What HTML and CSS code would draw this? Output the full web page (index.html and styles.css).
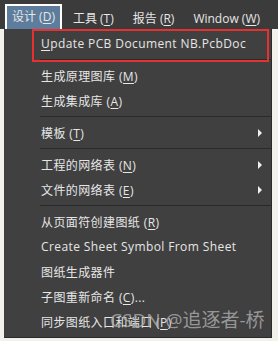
FILE: index.html
```html
<!DOCTYPE html>
<html lang="zh-CN">
<head>
    <meta charset="UTF-8">
    <title>设计菜单</title>
    <link rel="stylesheet" href="styles.css">
</head>
<body>
    <div class="menubar">
        <span class="menu active">设计 (<u>D</u>)</span>
        <span class="menu">工具 (<u>T</u>)</span>
        <span class="menu">报告 (<u>R</u>)</span>
        <span class="menu">Window (<u>W</u>)</span>
    </div>

    <div class="dropdown">
        <ul>
            <li class="item"><span><u>U</u>pdate PCB Document NB.PcbDoc</span></li>
            <li class="sep"></li>
            <li class="item"><span>生成原理图库 (<u>M</u>)</span></li>
            <li class="item"><span>生成集成库 (<u>A</u>)</span></li>
            <li class="sep"></li>
            <li class="item"><span>模板 (<u>T</u>)</span><i class="arrow"></i></li>
            <li class="sep"></li>
            <li class="item"><span>工程的网络表 (<u>N</u>)</span><i class="arrow"></i></li>
            <li class="item"><span>文件的网络表 (<u>E</u>)</span><i class="arrow"></i></li>
            <li class="sep"></li>
            <li class="item"><span>从页面符创建图纸 (<u>R</u>)</span></li>
            <li class="item"><span>Create Sheet Symbol From Sheet</span></li>
            <li class="item"><span>图纸生成器件</span></li>
            <li class="item"><span>子图重新命名 (<u>C</u>)...</span></li>
            <li class="item"><span>同步图纸入口和端口 (<u>P</u>)</span></li>
        </ul>
    </div>

    <!-- annotation drawn over the screenshot -->
    <div class="mark"></div>
    <div class="watermark">CSDN @追逐者-桥</div>
</body>
</html>
```

FILE: styles.css
```css
body {
    margin: 0;
    width: 278px;
    height: 341px;
    overflow: hidden;
    position: relative;
    background-color: #f3f1ec;
    font-family: "Open Sans", "Noto Sans CJK SC", sans-serif;
    font-size: 12px;
    letter-spacing: 0.4px;
    color: #e6e6e6;
    white-space: nowrap;
}

u {
    text-underline-offset: 2px;
}

.menubar {
    display: flex;
    align-items: flex-end;
    height: 29px;
    padding-left: 5px;
    background-color: #3b3b3b;
    letter-spacing: 0;
}

.menu {
    height: 21px;
    line-height: 21px;
    padding: 0 5px;
    margin-right: 5px;
    border: 2px solid transparent;
    border-bottom: 0;
}

.menu.active {
    padding: 0 5px 2px;
    margin-right: 4px;
    background-color: #5e7d9d;
    border-color: #ffffff;
}

.dropdown {
    width: 268px;
    height: 309px;
    margin-left: 4px;
    box-sizing: border-box;
    background-color: #404040;
    border-right: 1px solid #2a2a2a;
    border-bottom: 1px solid #2a2a2a;
    padding-top: 2px;
}

.dropdown ul {
    list-style: none;
    margin: 0;
    padding: 0;
}

.item {
    display: flex;
    align-items: center;
    justify-content: space-between;
    height: 25px;
    padding: 0 9px 0 37px;
}

.sep {
    height: 1px;
    margin: 3px 0 3px 36px;
    background-color: #2a2a2a;
}

.arrow {
    width: 0;
    height: 0;
    border-top: 4px solid transparent;
    border-bottom: 4px solid transparent;
    border-left: 4px solid #f0f0f0;
}

.mark {
    position: absolute;
    left: 32px;
    top: 29px;
    width: 233px;
    height: 29px;
    border: 2px solid #e5312f;
}

.watermark {
    position: absolute;
    left: 110px;
    top: 305px;
    font-size: 19px;
    letter-spacing: 0;
    color: rgba(175, 175, 175, 0.8);
}
```
